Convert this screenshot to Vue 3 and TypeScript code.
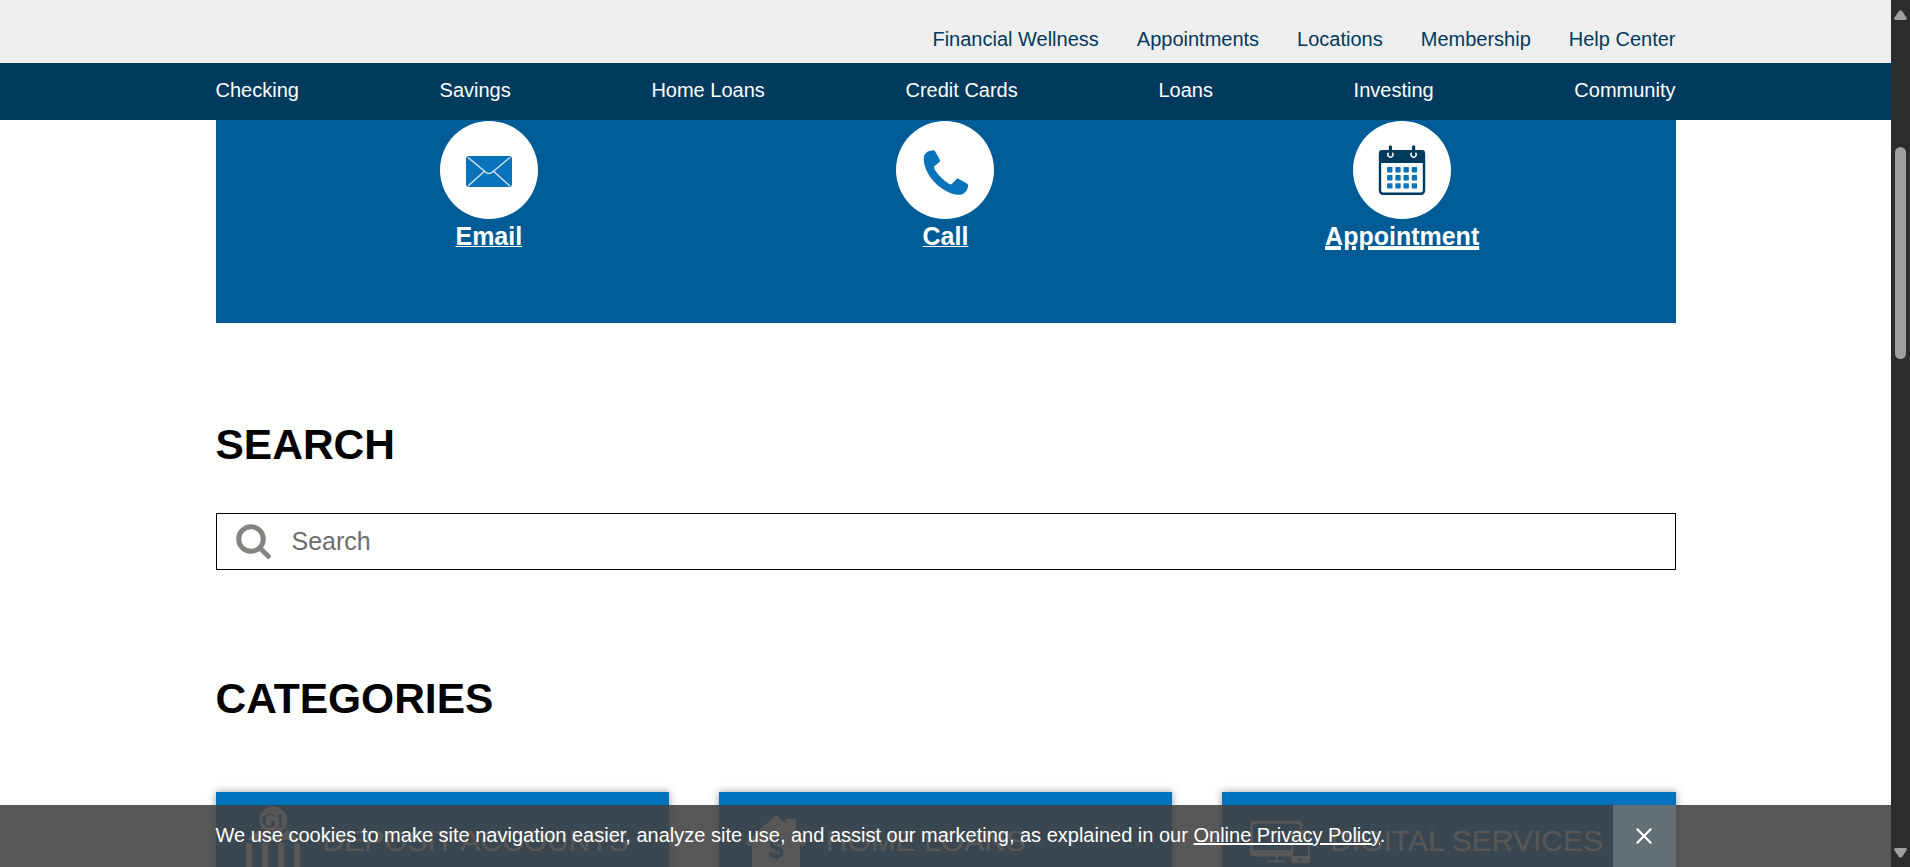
<script setup lang="ts">
interface ContactOption {
  id: 'email' | 'call' | 'appointment'
  label: string
}

interface Category {
  id: 'deposit' | 'home' | 'digital'
  label: string
}

const utilityLinks: string[] = ['Financial Wellness', 'Appointments', 'Locations', 'Membership', 'Help Center']
const mainLinks: string[] = ['Checking', 'Savings', 'Home Loans', 'Credit Cards', 'Loans', 'Investing', 'Community']

const contacts: ContactOption[] = [
  { id: 'email', label: 'Email' },
  { id: 'call', label: 'Call' },
  { id: 'appointment', label: 'Appointment' },
]

const categories: Category[] = [
  { id: 'deposit', label: 'DEPOSIT ACCOUNTS' },
  { id: 'home', label: 'HOME LOANS' },
  { id: 'digital', label: 'DIGITAL SERVICES' },
]

const calendarCells = Array.from({ length: 12 }, (_, i) => ({
  x: 34.1 + (i % 4) * 8.2,
  y: 46 + Math.floor(i / 4) * 8.1,
}))
</script>

<template>
  <div class="window">
    <div class="page">
      <header>
        <div class="utility">
          <nav class="container utility-nav">
            <a v-for="link in utilityLinks" :key="link" href="#">{{ link }}</a>
          </nav>
        </div>
        <div class="main-bar">
          <nav class="container main-nav">
            <a v-for="link in mainLinks" :key="link" href="#">{{ link }}</a>
          </nav>
        </div>
      </header>

      <main class="container">
        <section class="contact">
          <a v-for="item in contacts" :key="item.id" href="#" class="contact-item" :class="{ active: item.id === 'appointment' }">
            <svg class="contact-icon" viewBox="0 0 98 98" aria-hidden="true">
              <circle cx="49" cy="49" r="49" fill="#fff" />
              <g v-if="item.id === 'email'">
                <rect x="26" y="35" width="46" height="31" rx="3" fill="#0872bb" />
                <path d="M28 36.5 45.500 51Q49 54.2 52.500 51L70 36.5M28 65 44.2 50.5M70 65 53.8 50.5" fill="none" stroke="#dcecf7" stroke-width="1.3" />
              </g>
              <path
                v-else-if="item.id === 'call'"
                d="M28 35Q30 29.5 37.5 29.2Q38.5 29.3 39.2 30.4L43.8 38.8Q44.5 40.2 43.3 41.3L38 45.5Q37.7 47 39.3 49.5Q45.5 58.5 53 62.8Q54.8 63.8 56 62.8L60.3 58.2Q61.3 57.2 62.8 57.9L71 62.5Q72.4 63.3 72.2 65Q71 71 66.5 73.2Q62 74.8 55.5 72.4C42 67.5 31 55 28.4 43.5Q27.3 38 28 35Z"
                fill="#0872bb"
              />
              <g v-else>
                <rect x="27" y="30.3" width="44" height="42.5" rx="3" fill="#fff" stroke="#003a5d" stroke-width="2.4" />
                <path d="M26 42V32Q26 29 29 29H69Q72 29 72 32V42Z" fill="#003a5d" />
                <path d="M35.2 32.2A2.6 2.6 0 1 0 39.6 32.2M58.4 32.2A2.6 2.6 0 1 0 62.8 32.2" fill="none" stroke="#fff" stroke-width="1.5" stroke-linecap="round" />
                <path d="M37.4 25.8V31.5M60.6 25.8V31.5" stroke="#003a5d" stroke-width="3.2" stroke-linecap="round" />
                <rect v-for="(cell, i) in calendarCells" :key="i" :x="cell.x" :y="cell.y" width="5.4" height="5.4" rx="0.8" fill="#0872bb" />
              </g>
            </svg>
            <span>{{ item.label }}</span>
          </a>
        </section>

        <h2 class="search-title">SEARCH</h2>
        <div class="search">
          <svg class="search-icon" viewBox="0 0 35 35" aria-hidden="true">
            <circle cx="15" cy="15" r="12.3" fill="none" stroke="#868380" stroke-width="5" />
            <path d="M23.8 24 32.3 32.3" stroke="#868380" stroke-width="5" stroke-linecap="round" />
          </svg>
          <input type="text" placeholder="Search" aria-label="Search" />
        </div>

        <h2 class="categories-title">CATEGORIES</h2>
        <section class="cards">
          <a v-for="card in categories" :key="card.id" href="#" class="card" :class="card.id">
            <svg v-if="card.id === 'deposit'" class="card-icon" width="54" height="62" viewBox="0 0 54 62" aria-hidden="true">
              <circle cx="27.3" cy="15.3" r="13.7" fill="#fff" />
              <text x="27" y="21.500" text-anchor="middle" class="logo-text" fill="#0072bc">G1</text>
              <path d="M0 35 13 25Q18 31 27 31T41.500 25L54 35Z M0 38H6V62H0Z M16 38H22V62H16Z M32 38H38V62H32Z M48 38H54V62H48Z" fill="#fff" />
            </svg>
            <svg v-else-if="card.id === 'home'" class="card-icon" width="60" height="62" viewBox="0 0 60 62" aria-hidden="true">
              <path d="M30 10 40 18.500V14H50V27L60 37.500 57 41.500 54 39.500V62H6V39.500L3 41.500 0 37.500Z" fill="#fff" />
              <text x="30" y="53" text-anchor="middle" class="dollar" fill="#0072bc">$</text>
            </svg>
            <svg v-else class="card-icon" width="61" height="62" viewBox="0 0 61 62" aria-hidden="true">
              <path d="M40.500 50H4Q1.500 50 1.500 46.500V20Q1.500 17.500 4.500 17.500H48Q51 17.500 51 20V24" fill="none" stroke="#fff" stroke-width="3" />
              <path d="M1 45H41V51H1ZM26 50H28V55.500H35V57.500H17V55.500H26Z" fill="#fff" />
              <path d="M44 25H57Q60 25 60 28V55Q60 58 57 58H44Q41 58 41 55V28Q41 25 44 25ZM43 29V51H58V29ZM50.500 52.800A1.700 1.700 0 1 0 50.600 52.800Z" fill="#fff" fill-rule="evenodd" />
            </svg>
            <span>{{ card.label }}</span>
          </a>
        </section>
      </main>

      <div class="cookie">
        <div class="container cookie-inner">
          <p>We use cookies to make site navigation easier, analyze site use, and assist our marketing, as explained in our <a href="#">Online Privacy Policy</a>.</p>
          <button type="button" aria-label="Close">
            <svg width="16" height="16" viewBox="0 0 16 16"><path d="M.8.8 15.200 15.200M15.200.8.8 15.200" stroke="#fff" stroke-width="2.200" /></svg>
          </button>
        </div>
      </div>
    </div>

    <div class="scrollbar" aria-hidden="true">
      <svg width="13" height="10" viewBox="0 0 13 10"><path d="M5 1Q6.500-.5 8 1L12.500 7.500Q13.500 9.800 11.500 10H1.500Q-.5 9.800.5 7.500Z" fill="#9f9f9f" /></svg>
      <div class="thumb"></div>
      <svg class="down" width="13" height="10" viewBox="0 0 13 10"><path d="M5 9Q6.500 10.500 8 9L12.500 2.500Q13.500.2 11.500 0H1.500Q-.5.2.5 2.500Z" fill="#9f9f9f" /></svg>
    </div>
  </div>
</template>

<style>
body {
  margin: 0;
  overflow: hidden;
}
</style>

<style scoped>
* {
  box-sizing: border-box;
}

.window {
  display: flex;
  width: 1910px;
  height: 867px;
  overflow: hidden;
  background: #fff;
  font-family: Arial, "Liberation Sans", sans-serif;
  font-size: 20px;
  color: #000;
}

.page {
  position: relative;
  width: 1891px;
  height: 867px;
  overflow: hidden;
}

.container {
  width: 1460px;
  margin: 0 auto;
}

a {
  text-decoration: none;
  color: inherit;
}

.utility {
  height: 63px;
  background: #eee;
  color: #003a5d;
}

.utility-nav {
  display: flex;
  justify-content: flex-end;
  gap: 38px;
  padding-top: 27px;
  line-height: 24px;
}

.main-bar {
  height: 57px;
  background: #003a5d;
  color: #fff;
}

.main-nav {
  display: flex;
  justify-content: space-between;
  padding-top: 15px;
  line-height: 24px;
}

.contact {
  display: grid;
  grid-template-columns: repeat(3, 1fr);
  height: 203px;
  padding: 1px 45px 0;
  background: #005c97;
  color: #fff;
}

.contact-item {
  display: flex;
  flex-direction: column;
  align-items: center;
  font-size: 25px;
  font-weight: 700;
  line-height: 34px;
}

.contact-icon {
  width: 98px;
  height: 98px;
}

.contact-item span {
  text-decoration: underline;
  text-decoration-thickness: 1px;
  text-underline-offset: 1px;
}

.contact-item.active span {
  text-decoration-thickness: 4px;
}

h2 {
  margin: 0;
  font-size: 42.5px;
  font-weight: 700;
  line-height: 50px;
}

.search-title {
  margin-top: 97px;
}

.search {
  display: flex;
  align-items: center;
  height: 57px;
  margin-top: 43px;
  padding-left: 19px;
  border: 1px solid #000;
}

.search-icon {
  width: 35px;
  height: 35px;
}

.search input {
  flex: 1;
  height: 50px;
  padding: 0 21px;
  border: 0;
  outline: 0;
  background: transparent;
  font: 25px Arial, "Liberation Sans", sans-serif;
}

.search input::placeholder {
  color: #6d6d6d;
}

.categories-title {
  margin-top: 104px;
}

.cards {
  display: grid;
  grid-template-columns: repeat(3, 1fr);
  gap: 50px;
  margin-top: 68px;
}

.card {
  display: flex;
  height: 110px;
  padding: 13px 0 0 30px;
  background: #0072bc;
  box-shadow: 0 0 8px rgba(0, 0, 0, 0.4);
  color: #fff;
  font-size: 30px;
  line-height: 72px;
  white-space: nowrap;
}

.card span {
  margin-left: 23px;
}

.card.home {
  padding-left: 27px;
}

.card.home span {
  margin-left: 20px;
}

.card.digital {
  padding-left: 28px;
}

.card.digital span {
  margin-left: 19px;
}

.card-icon {
  flex: none;
}

.logo-text {
  font: 700 18px "Liberation Serif", serif;
}

.dollar {
  font: 700 27px Arial, "Liberation Sans", sans-serif;
}

.cookie {
  position: absolute;
  left: 0;
  right: 0;
  bottom: 0;
  height: 62px;
  background: rgba(66, 66, 66, 0.89);
  color: #fff;
}

.cookie-inner {
  display: flex;
  justify-content: space-between;
  height: 100%;
}

.cookie p {
  margin: 0;
  line-height: 60px;
}

.cookie a {
  text-decoration: underline;
}

.cookie button {
  display: flex;
  align-items: center;
  justify-content: center;
  width: 63px;
  height: 62px;
  padding: 0;
  border: 0;
  background: rgba(255, 255, 255, 0.21);
}

.scrollbar {
  display: flex;
  flex-direction: column;
  align-items: center;
  width: 19px;
  height: 867px;
  padding: 10px 0 9px;
  background: #2c2c2c;
}

.thumb {
  width: 11px;
  height: 212px;
  margin-top: 127px;
  border-radius: 5.5px;
  background: #9f9f9f;
}

.down {
  margin-top: auto;
}
</style>
